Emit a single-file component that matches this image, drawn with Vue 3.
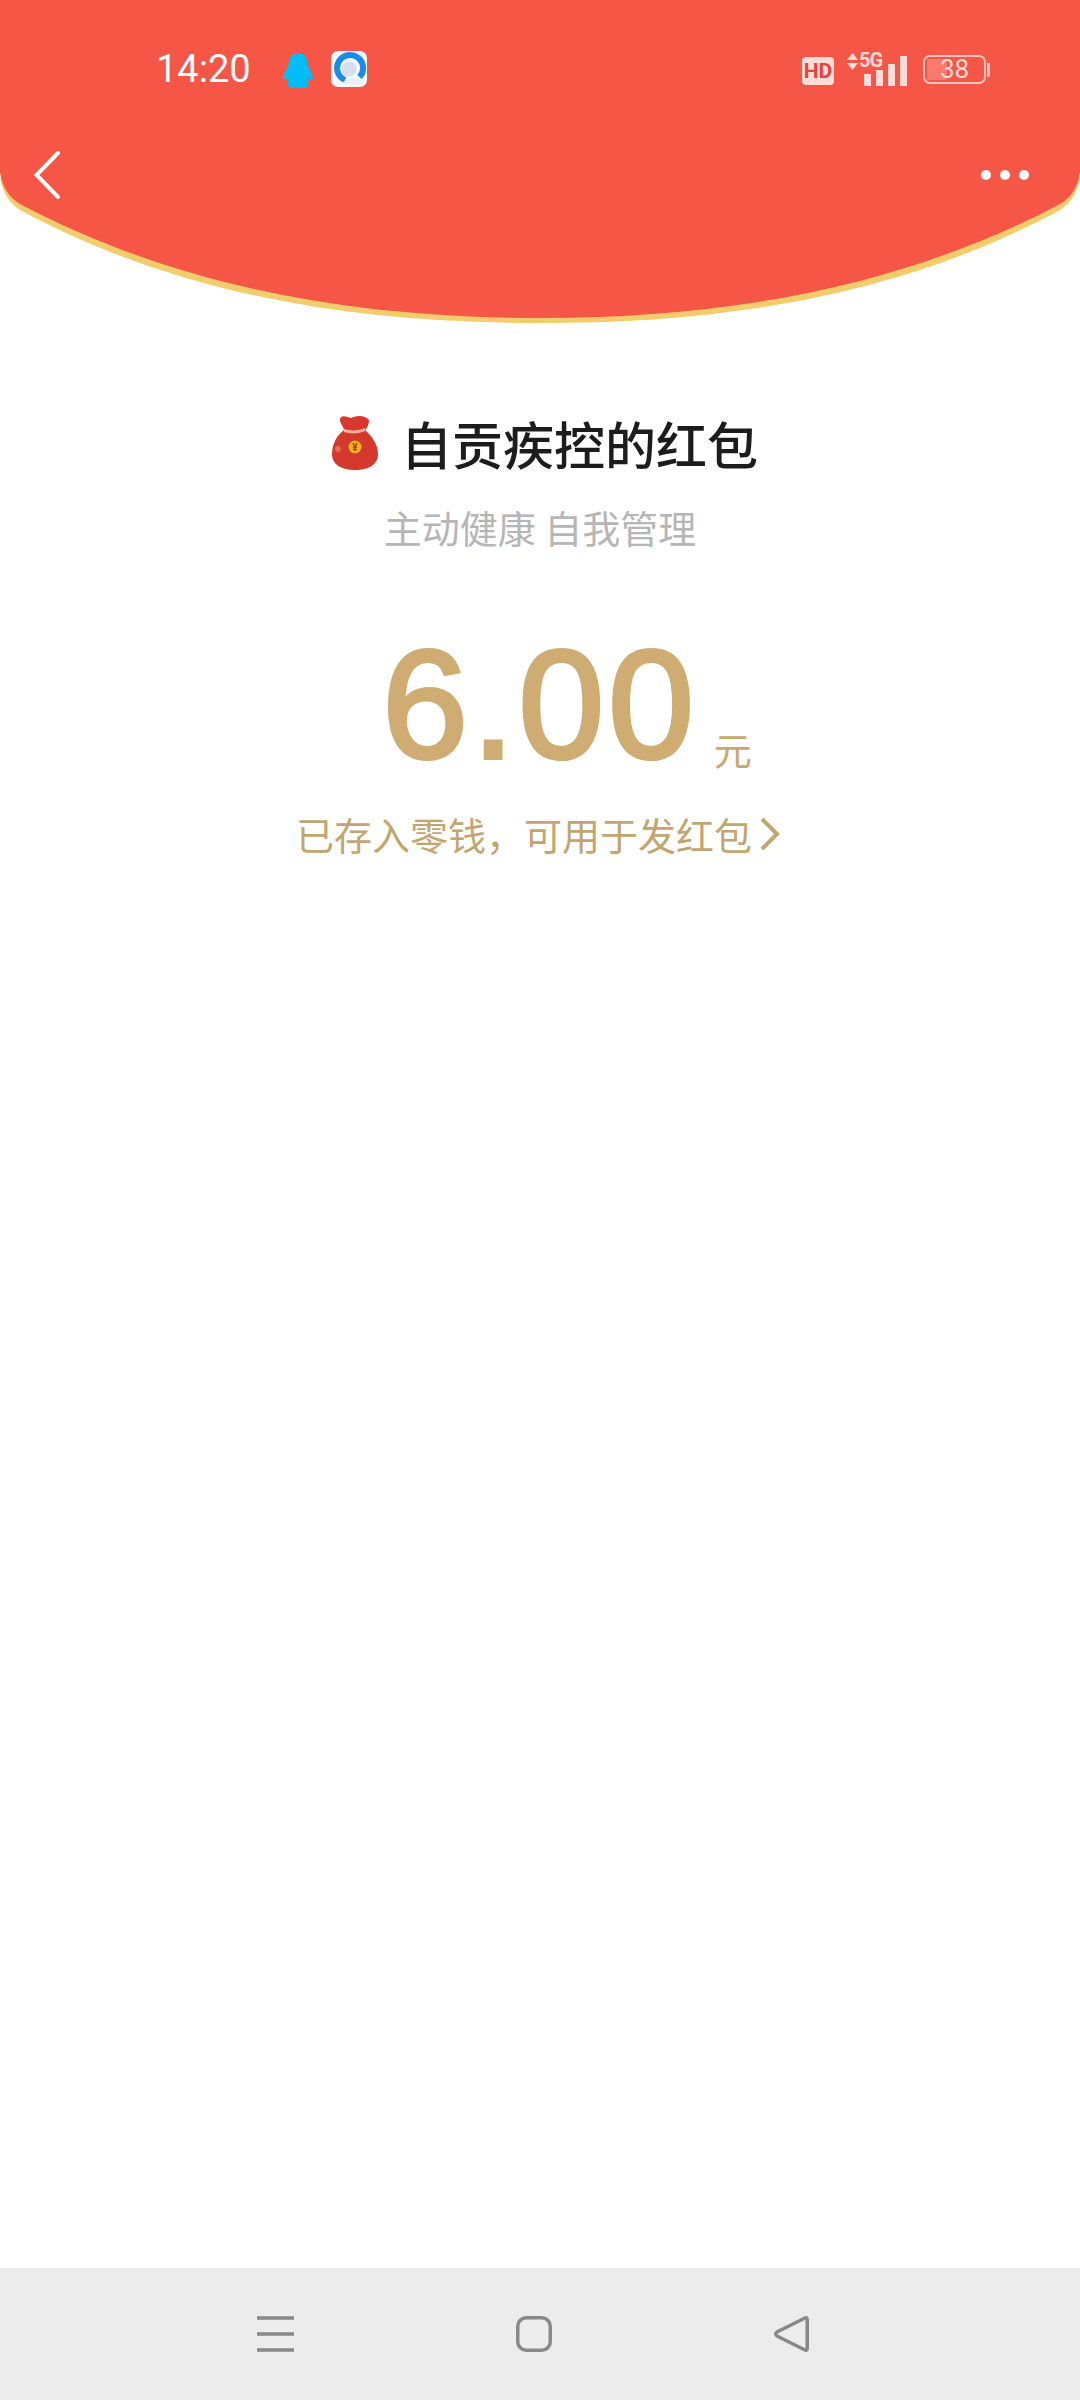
<script setup>
const title = '自贡疾控的红包'
const slogan = '主动健康 自我管理'
const amount = '6.00'
</script>

<template>
  <div class="page">
    <header class="top">
      <svg class="top-bg" viewBox="0 0 1080 326" width="1080" height="326">
        <path d="M0 178 Q4 200 20 210 C170 291 340 323 540 323 C740 323 910 291 1060 210 Q1076 200 1080 178 Z" fill="#f3cc6b" />
        <path d="M0 0 H1080 V172 Q1077 194 1060 204 C910 283 740 318 540 318 C340 318 170 283 20 204 Q3 194 0 172 Z" fill="#f55646" />
      </svg>

      <div class="status">
        <span class="time">14:20</span>
        <svg class="qq" width="30" height="35" viewBox="0 0 30 35">
          <path d="M15 0 C22 0 24.500 6 24.500 12 C27 17 30 22 30 26 C28.500 27 27 26 25.500 25 C25.500 29 25 32 24 35 L6 35 C5 32 4.500 29 4.500 25 C3 26 1.500 27 0 26 C0 22 3 17 5.500 12 C5.500 6 8 0 15 0 Z" fill="#00bdf5" />
        </svg>
        <svg class="browser" width="36" height="36" viewBox="0 0 36 36">
          <rect width="36" height="36" rx="7" fill="#f4f7fb" />
          <path d="M28.500 26 A13 13 0 1 0 14 29" fill="none" stroke="#1b8be8" stroke-width="6" />
          <circle cx="18" cy="18" r="7.500" fill="#d6dfeb" />
          <path d="M12 31 Q22 24 31 30 L31 33 L8 33 Z" fill="#e3f1fa" />
        </svg>

        <div class="status-right">
          <span class="hd">HD</span>
          <div class="signal">
            <svg class="arrows" width="11" height="17" viewBox="0 0 11 17">
              <path d="M5.500 0 L11 7 H0 Z M0 10 H11 L5.500 17 H5.500 Z" fill="#ffdcd8" />
            </svg>
            <span class="five-g">5G</span>
            <div class="bars">
              <i class="bar" style="height: 12px"></i>
              <i class="bar" style="height: 16px"></i>
              <i class="bar" style="height: 22px"></i>
              <i class="bar" style="height: 30px"></i>
            </div>
          </div>
          <div class="battery">
            <div class="battery-body">
              <i class="battery-fill"></i>
              <span class="battery-num">38</span>
            </div>
            <i class="battery-tip"></i>
          </div>
        </div>
      </div>

      <div class="nav">
        <svg width="30" height="50" viewBox="0 0 30 50">
          <path d="M24 3 L2.500 25 L24 47" fill="none" stroke="#fff" stroke-width="4" stroke-linecap="round" />
        </svg>
        <div class="dots">
          <i class="dot"></i>
          <i class="dot"></i>
          <i class="dot"></i>
        </div>
      </div>
    </header>

    <main class="content">
      <div class="title-row">
        <svg class="bag" width="46" height="60" viewBox="0 -2 46 60">
          <path d="M8 4 C10 -1 15 2 19 3 C25 0 33 0 37 5 C37 10 35 12 33 16 L12 16 C12 11 7 8 8 4 Z" fill="#d8392c" />
          <path d="M12 15 C4 21 0 30 0 39 C0 50 10 55 23 55 C36 55 46 50 46 39 C46 30 40 21 33 15 Z" fill="#d4392b" />
          <path d="M12 14 C18 16 27 16 33 13 L33 16 C27 19 18 19 12 17 Z" fill="#f6b39a" />
          <circle cx="6" cy="34" r="3" fill="#e8685a" />
          <circle cx="23" cy="32" r="6.500" fill="#f5b316" />
          <text x="23" y="35.500" class="coin" text-anchor="middle">¥</text>
        </svg>
        <h1 class="title">{{ title }}</h1>
      </div>
      <p class="slogan">{{ slogan }}</p>

      <div class="amount-row">
        <span class="amount">{{ amount }}</span>
        <span class="unit">元</span>
      </div>

      <div class="tip">
        <span>已存入零钱，可用于发红包</span>
        <svg width="20" height="34" viewBox="0 0 20 34">
          <path d="M2 2 L17 17 L2 32" fill="none" stroke="#c3a56f" stroke-width="4" />
        </svg>
      </div>
    </main>

    <footer class="bottom">
      <svg width="37" height="36" viewBox="0 0 37 36">
        <path d="M0 2 H37 M0 18 H37 M0 34 H37" stroke="#888" stroke-width="3.500" />
      </svg>
      <svg width="36" height="36" viewBox="0 0 36 36">
        <rect x="1.750" y="1.750" width="32.500" height="32.500" rx="8.500" fill="none" stroke="#888" stroke-width="3.500" />
      </svg>
      <svg width="35" height="36" viewBox="0 0 35 36">
        <path d="M31 2 Q33.250 1 33.250 4 V32 Q33.250 35 31 34 L3 20 Q0.500 18 3 16 Z" fill="none" stroke="#888" stroke-width="3.500" />
      </svg>
    </footer>
  </div>
</template>

<style scoped>
.page {
  display: flex;
  flex-direction: column;
  min-height: 100vh;
  background: #fff;
  font-family: "Noto Sans CJK SC", "Noto Sans", sans-serif;
}

.top {
  position: relative;
  height: 326px;
  box-sizing: border-box;
}

.top-bg {
  position: absolute;
  top: 0;
  left: 0;
  display: block;
}

.status {
  position: relative;
  display: flex;
  align-items: center;
  height: 36px;
  padding: 51px 90px 0 156px;
}

.time {
  width: 127px;
  color: #fff;
  font: 400 38px/36px Roboto, sans-serif;
}

.qq {
  margin-top: 2px;
}

.browser {
  margin-left: 18px;
}

.status-right {
  display: flex;
  align-items: flex-start;
  margin-left: auto;
}

.hd {
  width: 32px;
  height: 28px;
  margin-top: 5px;
  border-radius: 4px;
  background: #ffdcd8;
  color: #e2453a;
  font: 700 21px/28px Roboto, sans-serif;
  text-align: center;
}

.signal {
  position: relative;
  width: 60px;
  height: 34px;
  margin-left: 13px;
}

.arrows {
  position: absolute;
  top: 1px;
  left: 0;
}

.five-g {
  position: absolute;
  top: -1px;
  left: 12px;
  color: #ffdcd8;
  font: 700 20px/18px Roboto, sans-serif;
  letter-spacing: -1px;
}

.bars {
  position: absolute;
  right: 0;
  bottom: 0;
  display: flex;
  align-items: flex-end;
  gap: 5px;
}

.bar {
  display: block;
  width: 7px;
  background: #ffdcd8;
}

.battery {
  display: flex;
  align-items: center;
  margin-left: 16px;
  margin-top: 3px;
}

.battery-body {
  position: relative;
  width: 63px;
  height: 29px;
  box-sizing: border-box;
  border: 2px solid #ffc4bd;
  border-radius: 7px;
  overflow: hidden;
}

.battery-fill {
  position: absolute;
  top: 2px;
  bottom: 2px;
  left: 2px;
  width: 20px;
  background: #fb7a6e;
}

.battery-num {
  position: relative;
  display: block;
  color: #ffdcd8;
  font: 400 26px/25px Roboto, sans-serif;
  text-align: center;
}

.battery-tip {
  display: block;
  width: 3px;
  height: 14px;
  margin-left: 1px;
  background: #ffc4bd;
}

.nav {
  position: relative;
  display: flex;
  align-items: center;
  justify-content: space-between;
  height: 50px;
  padding: 0 51px 0 34px;
  margin-top: 63px;
}

.dots {
  display: flex;
  gap: 9px;
}

.dot {
  display: block;
  width: 10px;
  height: 10px;
  border-radius: 50%;
  background: #fff;
}

.content {
  flex: 1;
  display: flex;
  flex-direction: column;
  align-items: center;
  padding-top: 87px;
}

.title-row {
  display: flex;
  align-items: center;
  gap: 23px;
  margin-left: 10px;
}

.bag {
  display: block;
}

.coin {
  fill: #a8400f;
  font: 700 10px Roboto, sans-serif;
}

.title {
  margin: 0;
  color: #1c1c1c;
  font-size: 51px;
  font-weight: 500;
  line-height: 60px;
}

.slogan {
  margin: 29px 0 0;
  color: #b6b6b6;
  font-size: 38px;
  line-height: 50px;
}

.amount-row {
  display: flex;
  align-items: flex-end;
  gap: 16px;
  margin-top: 68px;
  margin-left: 54px;
}

.amount {
  color: #cfac72;
  font: 400 154px/170px "Liberation Sans", sans-serif;
  letter-spacing: 4px;
  -webkit-text-stroke: 4px #cfac72;
}

.unit {
  margin-bottom: 21px;
  color: #c9a76f;
  font-size: 38px;
  line-height: 40px;
}

.tip {
  display: flex;
  align-items: center;
  gap: 8px;
  margin-top: 19px;
  margin-right: 4px;
  color: #c3a56f;
  font-size: 38px;
  line-height: 50px;
}

.bottom {
  display: flex;
  align-items: center;
  justify-content: center;
  gap: 222px;
  height: 132px;
  padding-right: 14px;
  background: #ececec;
}
</style>
